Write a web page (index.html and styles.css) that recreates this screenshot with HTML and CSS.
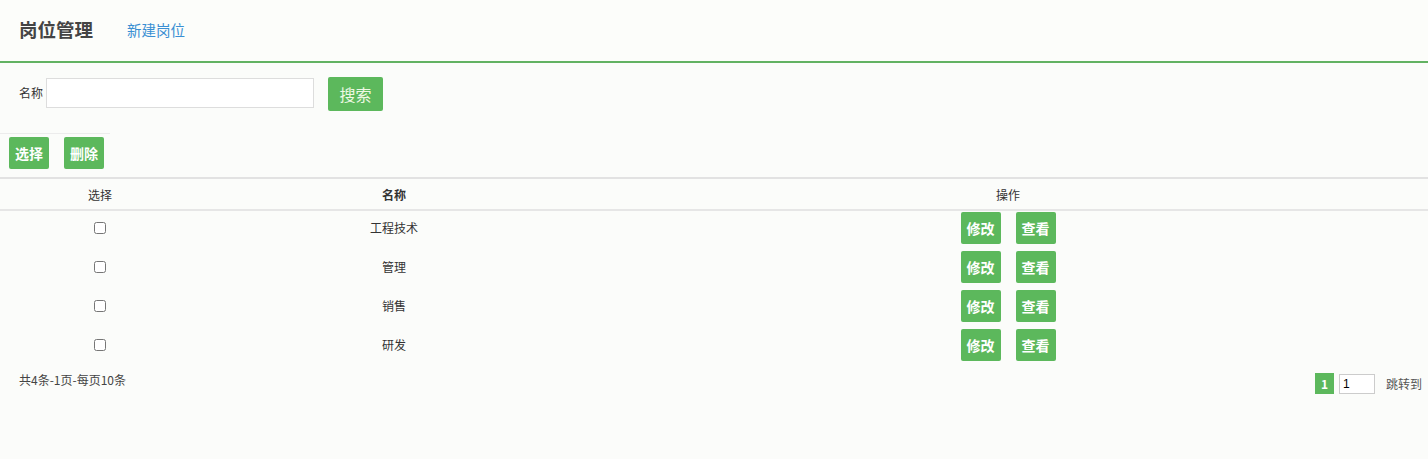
FILE: index.html
```html
<!DOCTYPE html>
<html lang="zh-CN">
<head>
    <meta charset="UTF-8">
    <title>岗位管理</title>
    <link rel="stylesheet" href="styles.css">
</head>
<body>
    <!-- Header -->
    <div class="header">
        <h1 class="title">岗位管理</h1>
        <a class="header-link" href="#">新建岗位</a>
    </div>

    <!-- Search -->
    <div class="search-bar">
        <label class="search-label">名称</label>
        <input class="search-input" type="text">
        <button class="btn btn-search">搜索</button>
    </div>

    <!-- Toolbar -->
    <div class="toolbar">
        <button class="btn btn-small">选择</button>
        <button class="btn btn-small">删除</button>
    </div>

    <!-- List -->
    <table class="list">
        <thead>
            <tr>
                <th class="col-check">选择</th>
                <th class="col-name strong">名称</th>
                <th class="col-ops">操作</th>
            </tr>
        </thead>
        <tbody>
            <tr>
                <td><input type="checkbox"></td>
                <td>工程技术</td>
                <td><button class="btn btn-small">修改</button><button class="btn btn-small">查看</button></td>
            </tr>
            <tr>
                <td><input type="checkbox"></td>
                <td>管理</td>
                <td><button class="btn btn-small">修改</button><button class="btn btn-small">查看</button></td>
            </tr>
            <tr>
                <td><input type="checkbox"></td>
                <td>销售</td>
                <td><button class="btn btn-small">修改</button><button class="btn btn-small">查看</button></td>
            </tr>
            <tr>
                <td><input type="checkbox"></td>
                <td>研发</td>
                <td><button class="btn btn-small">修改</button><button class="btn btn-small">查看</button></td>
            </tr>
        </tbody>
    </table>

    <!-- Pager -->
    <div class="pager">
        <span class="pager-info">共4条-1页-每页10条</span>
        <div class="pager-nav">
            <span class="page-current">1</span>
            <input class="page-input" type="text" value="1">
            <span class="page-jump">跳转到</span>
        </div>
    </div>
</body>
</html>
```

FILE: styles.css
```css
/* Base */
body {
    margin: 0;
    background: #fbfcfa;
    font-family: "Noto Sans CJK SC", "Liberation Sans", sans-serif;
    font-size: 12px;
    color: #333;
}

/* Header */
.header {
    display: flex;
    align-items: center;
    height: 61px;
    padding-left: 19px;
    border-bottom: 2px solid #62b262;
    background: #fcfdfa;
}

.title {
    margin: 0 34px 3px 0;
    font-size: 18.5px;
    font-weight: bold;
    color: #444;
}

.header-link {
    margin-bottom: 3px;
    font-size: 14.5px;
    color: #3a8fd3;
    text-decoration: none;
}

/* Search */
.search-bar {
    display: flex;
    align-items: center;
    height: 60px;
    padding-left: 19px;
    margin-bottom: 10px;
}

.search-label {
    margin: 0 3px 2px 0;
}

.search-input {
    width: 268px;
    height: 30px;
    box-sizing: border-box;
    border: 1px solid #ddd;
    background: #fff;
    margin-right: 14px;
}

/* Buttons */
.btn {
    border: none;
    border-radius: 2px;
    background: #5cb85c;
    color: #fff;
    font-family: inherit;
    cursor: pointer;
}

.btn-search {
    width: 55px;
    height: 34px;
    margin-top: 2px;
    font-size: 16px;
    color: #eef8e4;
}

.btn-small {
    width: 40px;
    height: 32px;
    padding: 0;
    font-size: 14px;
    font-weight: bold;
    vertical-align: top;
}

/* Toolbar */
.toolbar {
    display: flex;
    gap: 15px;
    width: fit-content;
    padding: 3px 6px 8px 9px;
    border-top: 1px solid #ececec;
}

/* List */
.list {
    width: 100%;
    border-collapse: collapse;
    border-top: 2px solid #e2e2e2;
}

.list th {
    height: 30px;
    font-weight: normal;
    border-bottom: 2px solid #e6e6e6;
    padding: 0;
}

.list th.strong {
    font-weight: bold;
}

.col-check {
    width: 200px;
}

.col-name {
    width: 388px;
}

.list tbody tr {
    height: 39px;
}

.list td {
    text-align: center;
    padding: 1px 0 6px;
    line-height: 32px;
}

.list td .btn + .btn {
    margin-left: 15px;
}

.list input[type="checkbox"] {
    width: 12px;
    height: 12px;
    margin: 0;
    vertical-align: middle;
    position: relative;
    top: -2px;
}

/* Pager */
.pager {
    display: flex;
    justify-content: space-between;
    align-items: flex-start;
    padding: 6px 6px 0 19px;
}

.pager-info {
    line-height: 14px;
    color: #444;
}

.pager-nav {
    display: flex;
    align-items: center;
}

.page-current {
    width: 19px;
    height: 21px;
    line-height: 21px;
    text-align: center;
    background: #5cb85c;
    color: #fff;
    font-weight: bold;
    margin-right: 5px;
}

.page-input {
    width: 36px;
    height: 20px;
    box-sizing: border-box;
    border: 1px solid #ccc;
    padding: 0 3px;
    font-size: 12px;
    margin-right: 11px;
}

.page-jump {
    color: #555;
}
```
